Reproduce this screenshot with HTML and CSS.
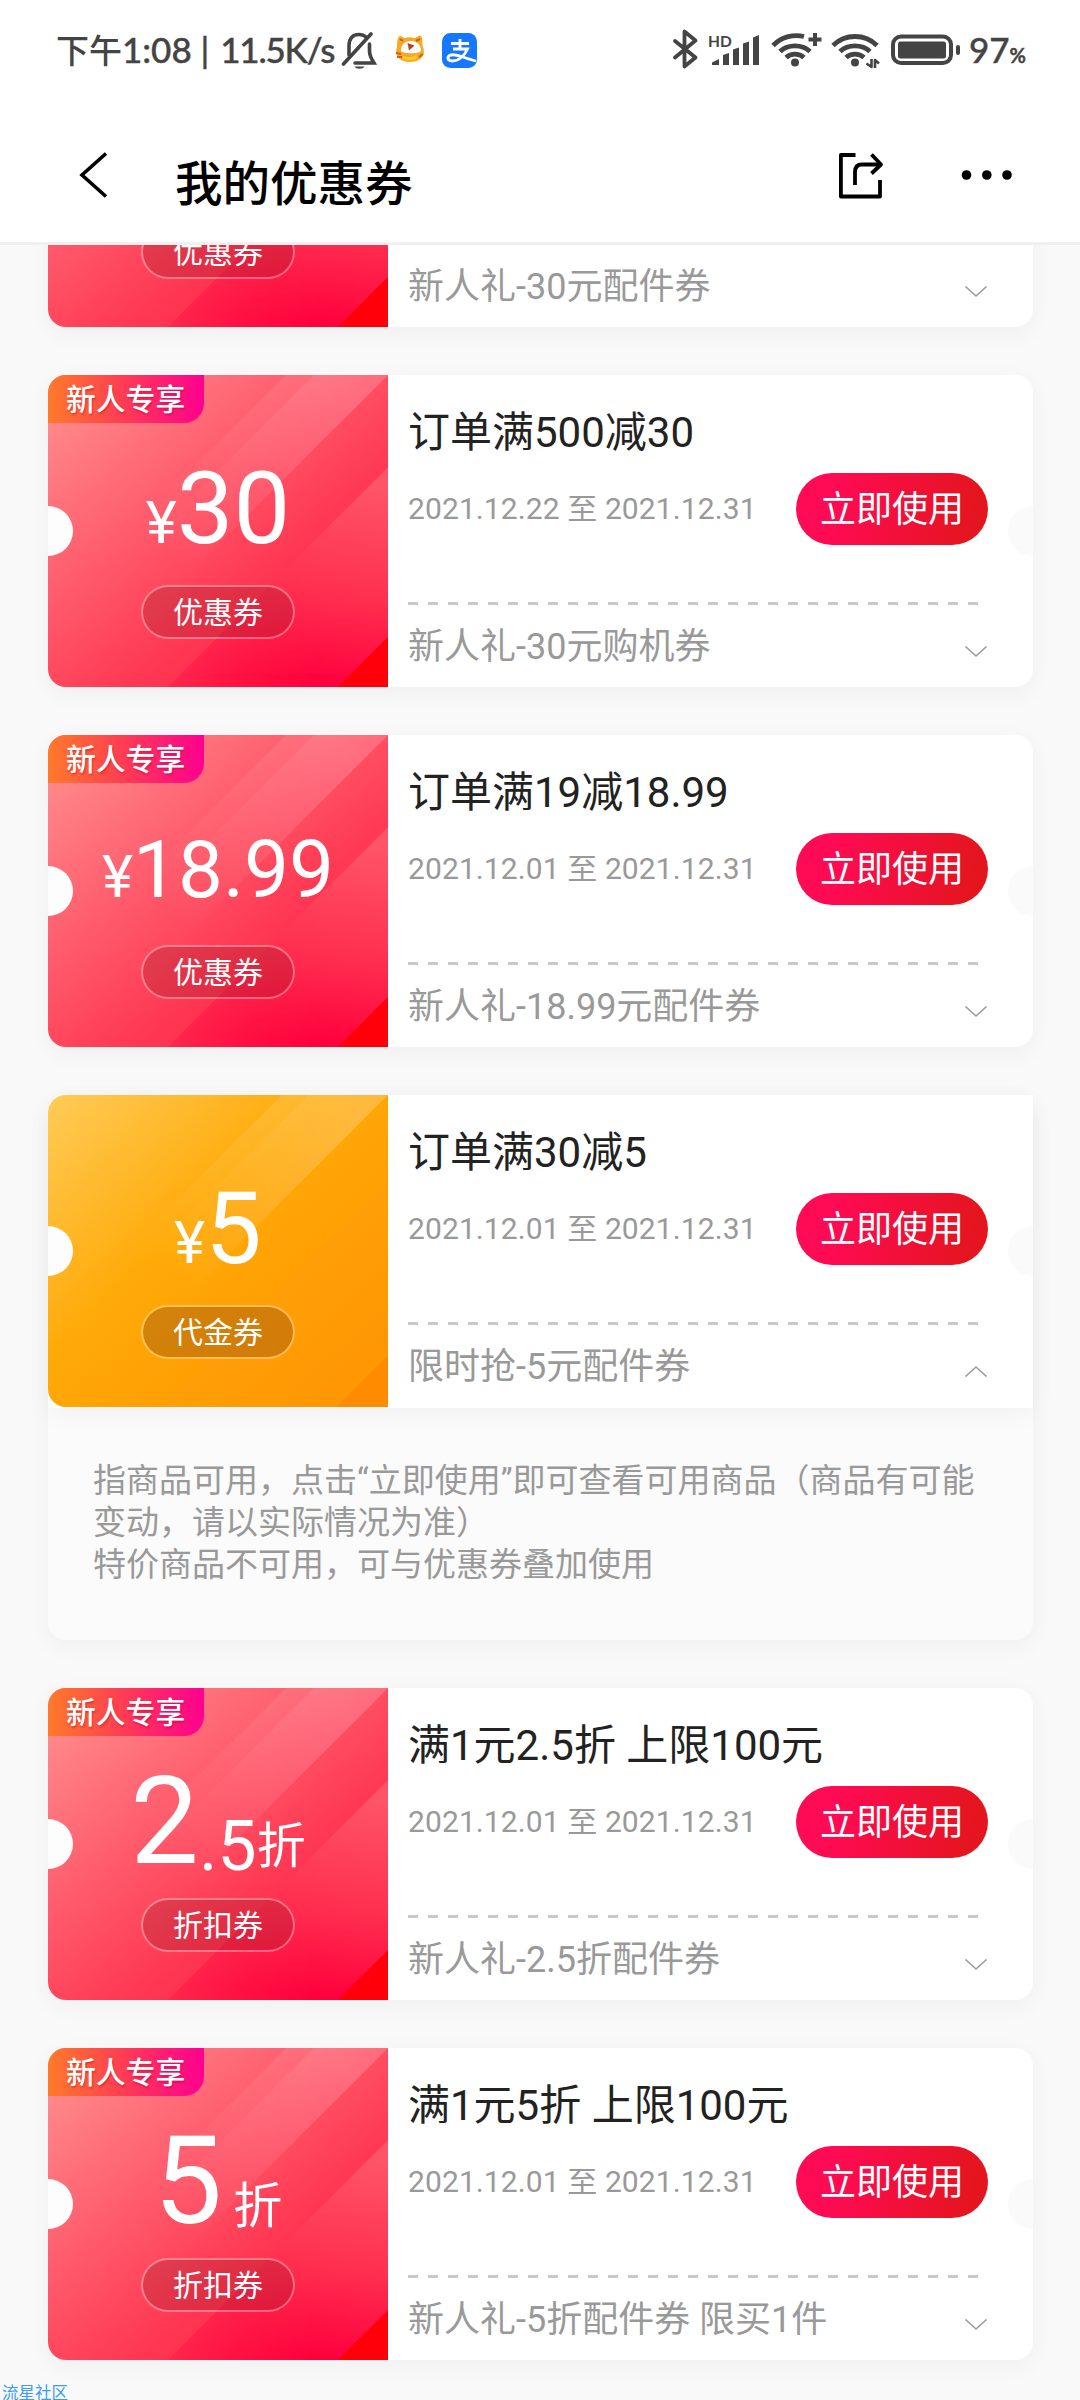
FILE: index.html
```html
<!DOCTYPE html>
<html lang="zh-CN">
<head>
<meta charset="utf-8">
<title>我的优惠券</title>
<link rel="stylesheet" href="styles.css">
</head>
<body>
<svg class="defs" width="0" height="0" aria-hidden="true">
  <defs>
    <linearGradient id="redBase" gradientUnits="userSpaceOnUse" x1="20" y1="20" x2="230" y2="270">
      <stop offset="0" stop-color="#ff8b8b"/><stop offset=".4" stop-color="#ff606f"/><stop offset=".8" stop-color="#ff3853"/><stop offset="1" stop-color="#ff2b4c"/>
    </linearGradient>
    <linearGradient id="redLow" gradientUnits="userSpaceOnUse" x1="310" y1="110" x2="285" y2="312">
      <stop offset="0" stop-color="#ff5468"/><stop offset=".55" stop-color="#ff2f50"/><stop offset="1" stop-color="#ff003c"/>
    </linearGradient>
    <linearGradient id="redFade" gradientUnits="userSpaceOnUse" x1="100" y1="0" x2="270" y2="0">
      <stop offset="0" stop-color="#fff" stop-opacity=".1"/><stop offset="1" stop-color="#fff"/>
    </linearGradient>
    <mask id="lowMask"><rect width="340" height="312" fill="url(#redFade)"/></mask>
    <linearGradient id="beam" gradientUnits="userSpaceOnUse" x1="300" y1="20" x2="130" y2="190">
      <stop offset="0" stop-color="#fff" stop-opacity=".14"/><stop offset="1" stop-color="#fff" stop-opacity="0"/>
    </linearGradient>
    <linearGradient id="goldBase" gradientUnits="userSpaceOnUse" x1="10" y1="10" x2="280" y2="300">
      <stop offset="0" stop-color="#ffc952"/><stop offset=".45" stop-color="#ffaa08"/><stop offset="1" stop-color="#ff9400"/>
    </linearGradient>
    <symbol id="redArt" viewBox="0 0 340 312">
      <rect width="340" height="312" fill="url(#redBase)"/>
      <path d="M238 0H340L90 250V148Z" fill="url(#beam)" opacity=".7"/>
      <path d="M266 0H340L90 250V176Z" fill="url(#beam)" opacity=".6"/>
      <path d="M340 92V312H120Z" fill="url(#redLow)" mask="url(#lowMask)"/>
      <path d="M340 262V312H290Z" fill="#ff000a"/>
    </symbol>
    <symbol id="goldArt" viewBox="0 0 340 312">
      <rect width="340" height="312" fill="url(#goldBase)"/>
      <path d="M234 0H340L90 250V144Z" fill="url(#beam)"/>
      <path d="M260 0H340L90 250V170Z" fill="url(#beam)" opacity=".6"/>
      <path d="M340 90V312H118Z" fill="#ffa010" opacity=".25"/>
      <path d="M340 260V312H288Z" fill="#ff8c00"/>
    </symbol>
    <symbol id="chevron" viewBox="0 0 24 13"><path d="M1.500 1.500L12 11L22.500 1.500" fill="none" stroke="#999" stroke-width="1.600"/></symbol>
  </defs>
</svg>

<header class="header">
  <div class="status">
    <span class="status-time">下午<b>1:08 | </b><b class="speed">11.5K/s</b></span>
    <svg class="ic-bell" width="36" height="40" viewBox="0 0 36 40" fill="none" stroke="#444" stroke-width="3.600" stroke-linecap="round">
      <path d="M2.500 33L30 3"/><path d="M8 24V15C8 7 12 3.500 18 3.500C21 3.500 23 4.200 25 6M28.500 13V20C28.500 25 30.500 28 33 32H14" />
      <path d="M13.500 35.500H23.500C22 38.500 15 38.500 13.500 35.500Z" fill="#444" stroke="none"/>
    </svg>
    <svg class="ic-cat" width="30" height="28" viewBox="0 0 30 28">
      <path d="M2 12C2 5 3 1 5 1C7 1 8 3 10 3C13 2 17 2 20 3C22 2 24 0 26 1C28 3 27 9 28 12C31 20 26 27 15 27C4 27-1 20 2 12Z" fill="#f9a825"/>
      <path d="M1 18L6 19M2 22L7 22M24 22L28 19M5 4L8 6M21 6L25 4" stroke="#c5641a" stroke-width="2"/>
      <path d="M6 16C6 9 10 6 16 6C22 6 26 10 26 16C24 19 8 19 6 16Z" fill="#fff"/>
      <path d="M12.500 8L19.500 10.500L14 15.500Z" fill="#b5402e"/><path d="M8 22C13 25 19 24 22 21" fill="none" stroke="#ffca28" stroke-width="3"/>
    </svg>
    <svg class="ic-pay" width="35" height="35" viewBox="0 0 35 35" fill="none" stroke="#fff" stroke-width="2.800">
      <rect width="35" height="35" rx="8.500" fill="#1677ff" stroke="none"/>
      <path d="M9 10.500H27M18 6V16M11 16H25.500C23 22 17 28 10.500 28C6 28 4.500 24.500 7.500 22.500C13 19.500 23 25.500 34 28"/>
    </svg>
    <svg class="ic-right" width="286" height="44" viewBox="0 0 286 44" fill="none" stroke="#444" stroke-linecap="round" stroke-linejoin="round">
      <path d="M2 13L22.500 29.500L11.500 38.500V3.500L22.500 12.500L2 29.500" stroke-width="3.800"/>
      <g fill="#444" stroke="none">
        <path d="M39 34.500L46 31V37H39Z"/><path d="M50 27L56 25V37H50ZM60 21.500L66 19.500V37H60ZM70 15.500L76 13.500V37H70ZM80 9.500L86 7V37H80Z"/>
        <circle cx="122" cy="34.500" r="4"/><path d="M118 34L122 38L126 34Z"/>
        <circle cx="182" cy="34.500" r="4"/><path d="M178 34L182 38L186 34Z"/>
      </g>
      <g stroke-width="4.800" stroke-linecap="butt">
        <path d="M100 17.500C109 8.500 121 6 131 8.500M107 23.500C115 16 129 16 137 23.500M113 29.500C118 25 126 25 131 29.500"/>
        <path d="M160 17.500C172 5.500 192 5.500 204 17.500M167 23.500C175 16 189 16 197 23.500M173 29.500C178 25 186 25 191 29.500"/>
        <path d="M142 5V18M135.500 11.500H148.500" stroke-width="4"/>
        <path d="M198.500 31V39L193.500 35.500M202 40V32L206 35.500" stroke-width="2.600"/>
      </g>
      <rect x="220" y="8.500" width="58" height="26.500" rx="8" stroke-width="4"/>
      <rect x="225" y="13.500" width="48" height="17" rx="2.500" fill="#444" stroke="none"/>
      <rect x="283" y="17" width="4" height="10" rx="2" fill="#444" stroke="none"/>
      <text x="35" y="19" class="hd">HD</text>
    </svg>
    <span class="status-pct">97<small>%</small></span>
  </div>
  <nav class="nav">
    <svg class="nav-back" width="30" height="50" viewBox="0 0 30 50"><path d="M28 3.500L4 25L28 46.500" fill="none" stroke="#000" stroke-width="3.600"/></svg>
    <h1 class="nav-title">我的优惠券</h1>
    <svg class="nav-share" width="48" height="48" viewBox="0 0 48 48" fill="none" stroke="#000" stroke-width="3.800" stroke-linejoin="round">
      <path d="M18.500 4H3.900V45.500H43V29"/><path d="M18 34V21C18 16 20 13.500 25 13.500H43"/><path d="M34.500 3.500L44 13.500L34.500 22.500"/>
    </svg>
    <svg class="nav-more" width="54" height="12" viewBox="0 0 54 12"><circle cx="6.500" cy="6" r="4.800"/><circle cx="26.800" cy="6" r="4.800"/><circle cx="47" cy="6" r="4.800"/></svg>
  </nav>
</header>

<main class="viewport">
  <div class="list">
    <article class="coupon">
      <div class="face"><svg class="art"><use href="#redArt"/></svg>
        <div class="price"></div><span class="kind">优惠券</span></div>
      <div class="info"><h2></h2><div class="row"></div><div class="dash"></div>
        <div class="foot"><span>新人礼-30元配件券</span><svg class="chev"><use href="#chevron"/></svg></div></div>
    </article>

    <article class="coupon">
      <div class="face"><svg class="art"><use href="#redArt"/></svg><span class="tag">新人专享</span>
        <div class="price"><span class="yen">¥</span><span class="num">30</span></div><span class="kind">优惠券</span></div>
      <div class="info"><h2>订单满500减30</h2><div class="row"><time>2021.12.22 至 2021.12.31</time><a class="use">立即使用</a></div><div class="dash"></div>
        <div class="foot"><span>新人礼-30元购机券</span><svg class="chev"><use href="#chevron"/></svg></div></div>
    </article>

    <article class="coupon">
      <div class="face"><svg class="art"><use href="#redArt"/></svg><span class="tag">新人专享</span>
        <div class="price long"><span class="yen">¥</span><span class="num">18.99</span></div><span class="kind">优惠券</span></div>
      <div class="info"><h2>订单满19减18.99</h2><div class="row"><time>2021.12.01 至 2021.12.31</time><a class="use">立即使用</a></div><div class="dash"></div>
        <div class="foot"><span>新人礼-18.99元配件券</span><svg class="chev"><use href="#chevron"/></svg></div></div>
    </article>

    <section class="group">
      <article class="coupon open">
        <div class="face"><svg class="art"><use href="#goldArt"/></svg>
          <div class="price"><span class="yen">¥</span><span class="num">5</span></div><span class="kind">代金券</span></div>
        <div class="info"><h2>订单满30减5</h2><div class="row"><time>2021.12.01 至 2021.12.31</time><a class="use">立即使用</a></div><div class="dash"></div>
          <div class="foot"><span>限时抢-5元配件券</span><svg class="chev up"><use href="#chevron"/></svg></div></div>
      </article>
      <div class="detail">指商品可用，点击“立即使用”即可查看可用商品（商品有可能<br>变动，请以实际情况为准）<br>特价商品不可用，可与优惠券叠加使用</div>
    </section>

    <article class="coupon">
      <div class="face"><svg class="art"><use href="#redArt"/></svg><span class="tag">新人专享</span>
        <div class="price"><span class="big">2</span><span class="dec">.5</span><span class="zhe">折</span></div><span class="kind">折扣券</span></div>
      <div class="info"><h2>满1元2.5折 上限100元</h2><div class="row"><time>2021.12.01 至 2021.12.31</time><a class="use">立即使用</a></div><div class="dash"></div>
        <div class="foot"><span>新人礼-2.5折配件券</span><svg class="chev"><use href="#chevron"/></svg></div></div>
    </article>

    <article class="coupon">
      <div class="face"><svg class="art"><use href="#redArt"/></svg><span class="tag">新人专享</span>
        <div class="price whole"><span class="big">5</span><span class="zhe">折</span></div><span class="kind">折扣券</span></div>
      <div class="info"><h2>满1元5折 上限100元</h2><div class="row"><time>2021.12.01 至 2021.12.31</time><a class="use">立即使用</a></div><div class="dash"></div>
        <div class="foot"><span>新人礼-5折配件券 限买1件</span><svg class="chev"><use href="#chevron"/></svg></div></div>
    </article>
  </div>
</main>
<div class="watermark">流星社区</div>
</body>
</html>
```
FILE: styles.css
```css
* { box-sizing: border-box; }
body {
  margin: 0; width: 1080px; height: 2400px; overflow: hidden; position: relative;
  display: flex; flex-direction: column;
  background: #f9f9f9; color: #222;
  font-family: Roboto, "Noto Sans CJK SC", sans-serif;
}
h1, h2 { margin: 0; font-weight: 400; }
.defs { position: absolute; }

.header { flex: none; height: 245px; background: #fff; border-bottom: 3px solid #f0f0f0; }
.status { display: flex; align-items: flex-start; height: 100px; padding: 30px 0 0 56px; color: #444; }
.status-time { width: 285px; flex: none; font-size: 33px; line-height: 38px; font-weight: 500; white-space: nowrap; }
.status-time b { font-family: Lato, sans-serif; font-weight: 500; font-size: 35px; -webkit-text-stroke: .4px #444; }
.status-time .speed { margin-left: 2px; letter-spacing: -1.200px; }
.ic-bell { margin-top: 1px; flex: none; }
.ic-cat { margin: 5px 0 0 18px; flex: none; }
.ic-pay { flex: none; margin: 3px 0 0 17px; }
.ic-right { margin: -2px 0 0 196px; flex: none; overflow: visible; }
.hd { font: 700 15.500px Lato, sans-serif; fill: #444; stroke: none; }
.status-pct { margin-left: 10px; font: 500 35px/38px Lato, sans-serif; white-space: nowrap; -webkit-text-stroke: .4px #444; }
.status-pct small { font-size: 20px; font-weight: 700; }

.nav { display: flex; align-items: flex-start; height: 142px; padding-left: 78px; }
.nav-back { margin-top: 50px; }
.nav-title { margin: 50px 0 0 67px; width: 662px; font-size: 47.500px; line-height: 70px; font-weight: 500; color: #000; }
.nav-share { margin-top: 51px; }
.nav-more { margin: 69px 0 0 75px; }

.viewport { flex: 1; min-height: 0; overflow: hidden; }
.list { display: flex; flex-direction: column; gap: 48px; margin-top: -230px; padding: 0 47px 0 48px; }

.coupon {
  flex: none; display: flex; position: relative; height: 312px; overflow: hidden;
  border-radius: 18px; background: #fff;
}
.coupon, .group { box-shadow: 0 6px 24px rgba(0, 0, 0, .045); }
.coupon::before, .coupon::after {
  content: ""; position: absolute; z-index: 1; top: 131px; width: 50px; height: 50px; border-radius: 50%; background: #fdfdfd;
}
.coupon::before { left: -25px; }
.coupon::after { right: -25px; background: #fafafa; }

.face { position: relative; width: 340px; flex: none; display: flex; flex-direction: column; align-items: center; color: #fff; }
.art { position: absolute; inset: 0; width: 340px; height: 312px; }
.tag {
  position: absolute; left: 0; top: 0; width: 156px; height: 48px; padding-left: 18px;
  border-radius: 0 0 20px 0; background: linear-gradient(90deg, #ff7a2a, #ff3a55 50%, #ff0090);
  font-size: 29.800px; line-height: 49px; font-weight: 500; text-shadow: 1px 2px 2px rgba(160, 0, 30, .35); white-space: nowrap;
}
.price { position: relative; height: 210px; display: flex; align-items: flex-start; line-height: 1; white-space: nowrap; }
.yen { font-size: 59px; margin-top: 118px; }
.num { font-size: 101px; margin-top: 83px; }
.long .yen { margin-top: 112px; }
.long .num { font-size: 80px; margin-top: 95px; }
.big { font-size: 122px; margin-top: 73px; }
.dec { font-size: 70px; margin-top: 123px; }
.zhe { font-size: 49px; margin-top: 134px; }
.whole .zhe { margin-left: 11px; }
.kind {
  position: relative; width: 154px; height: 54px; border: 2px solid rgba(255, 255, 255, .32); border-radius: 27px;
  background: rgba(128, 20, 30, .24); background-clip: padding-box; font-size: 30px; line-height: 51px; text-align: center;
}
.open .kind { background-color: rgba(110, 50, 20, .3); }

.info { flex: 1; padding-left: 20px; }
.info h2 { height: 98px; padding-top: 33px; font-size: 42px; line-height: 50px; white-space: nowrap; }
.row { display: flex; justify-content: space-between; height: 129px; padding-right: 45px; color: #999; }
.row time { font-size: 30px; line-height: 72px; letter-spacing: .1px; white-space: nowrap; }
.use {
  width: 192px; height: 72px; border-radius: 36px; background: linear-gradient(100deg, #ff0a54 20%, #e5151f 90%);
  color: #fff; font-size: 36px; line-height: 75px; text-align: center; white-space: nowrap;
}
.dash { width: 570px; height: 3px; background: repeating-linear-gradient(90deg, #c9c9c9 0 10px, transparent 10px 20px); }
.foot { display: flex; justify-content: space-between; align-items: flex-start; height: 82px; padding-right: 45px; color: #999; font-size: 36px; line-height: 85px; white-space: nowrap; }
.chev { width: 24px; height: 13px; margin-top: 40px; }
.chev.up { transform: scaleY(-1); }

.group { flex: none; height: 545px; border-radius: 18px; background: #fbfbfb; }
.coupon.open { border-radius: 18px 0 0 0; height: 313px; }
.open .face { height: 312px; overflow: hidden; border-bottom-left-radius: 18px; }
.detail { padding: 52px 20px 0 45px; font-size: 33px; line-height: 42px; color: #999; white-space: nowrap; }

.watermark { position: absolute; left: 2px; bottom: -6px; font-size: 16.500px; line-height: 24px; color: #3c9cf5; }
```
